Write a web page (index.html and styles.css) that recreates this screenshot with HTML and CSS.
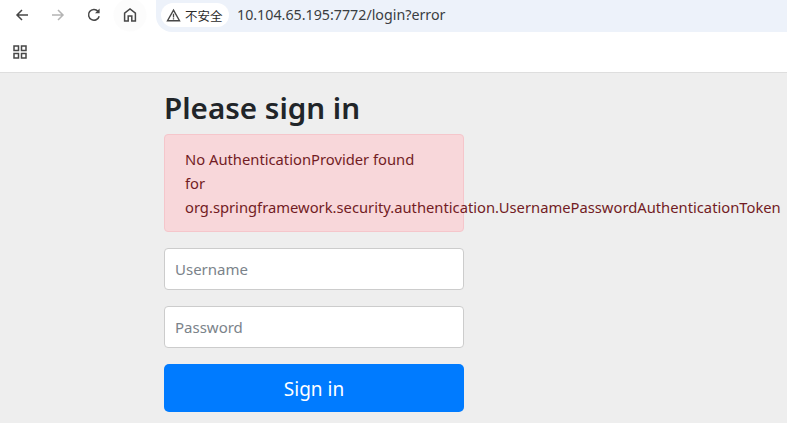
FILE: index.html
```html
<!DOCTYPE html>
<html lang="en">
<head>
<meta charset="utf-8">
<title>Please sign in</title>
<link rel="stylesheet" href="styles.css">
</head>
<body>
<header class="chrome">
  <div class="toolbar">
    <nav class="navs">
      <span class="nav"><svg viewBox="0 0 16 16" width="16" height="16"><path d="M14 8H3M8 3 3 8l5 5" fill="none" stroke="#474747" stroke-width="1.5"/></svg></span>
      <span class="nav"><svg viewBox="0 0 16 16" width="16" height="16"><path d="M2 8h11M8 3l5 5-5 5" fill="none" stroke="#b4b4b4" stroke-width="1.5"/></svg></span>
      <span class="nav"><svg viewBox="0 0 16 16" width="16" height="16"><path d="M13.2 9.2A5.4 5.4 0 1 1 12 4.2" fill="none" stroke="#474747" stroke-width="1.5"/><path d="M13.6 1.6v4.6H9z" fill="#474747"/></svg></span>
      <span class="nav nav-home"><svg viewBox="0 0 16 16" width="16" height="16"><path d="M2.6 14V6.200L8 2l5.400 4.200V14H9.800V9H6.200v5z" fill="none" stroke="#474747" stroke-width="1.5"/></svg></span>
    </nav>
    <div class="address">
      <span class="chip"><svg viewBox="0 0 16 16" width="15" height="15"><path d="M8 2.200 14.400 13.600H1.600z" fill="none" stroke="#474747" stroke-width="1.5"/><path d="M7.300 6.200h1.400v4H7.300zM7.300 11h1.400v1.300H7.300z" fill="#474747"/></svg><span class="chip-text">不安全</span></span>
      <span class="url">10.104.65.195:7772/login?error</span>
    </div>
  </div>
  <div class="bookmarks">
    <svg viewBox="0 0 14 14" width="14" height="14"><path d="M1 1h4.500v4.500H1zM8.500 1H13v4.500H8.500zM1 8.500h4.500V13H1zM8.500 8.500H13V13H8.500z" fill="none" stroke="#474747" stroke-width="1.500"/></svg>
  </div>
</header>
<main class="page">
  <form class="signin">
    <h2 class="heading">Please sign in</h2>
    <div class="alert">No AuthenticationProvider found<br>for<br>org.springframework.security.authentication.UsernamePasswordAuthenticationToken</div>
    <input class="field" type="text" placeholder="Username">
    <input class="field" type="password" placeholder="Password">
    <button class="submit" type="button">Sign in</button>
  </form>
</main>
</body>
</html>
```
FILE: styles.css
```css
* { box-sizing: border-box; }
html, body { margin: 0; height: 100%; overflow: hidden; }
body {
  display: flex;
  flex-direction: column;
  background: #eeeeee;
  font-family: "Noto Sans", "Open Sans", sans-serif;
  color: #212529;
}
.chrome {
  height: 73px;
  background: #fff;
  border-bottom: 1px solid #dedede;
  flex: none;
}
.toolbar { display: flex; height: 32px; }
.navs { display: flex; width: 156px; padding-left: 4px; }
.nav {
  width: 36px;
  height: 32px;
  display: flex;
  align-items: center;
  justify-content: center;
  padding-bottom: 2px;
}
.nav-home { background: radial-gradient(circle at center 15px, #fcfcfc 0 16px, transparent 17px); }
.address {
  flex: 1;
  background: #edf2fa;
  border-radius: 0 0 0 16px;
  display: flex;
  align-items: flex-start;
  padding: 3px 0 0 5px;
}
.chip {
  width: 68px;
  height: 24px;
  background: #fff;
  border-radius: 12px;
  display: flex;
  align-items: center;
  gap: 4px;
  padding-left: 5px;
}
.chip-text {
  font: 12.500px "Noto Sans CJK SC", sans-serif;
  color: #2b2b2b;
}
.url {
  margin-left: 8px;
  font-size: 14.250px;
  line-height: 24px;
  color: #3a3d42;
}
.bookmarks { height: 40px; padding: 10px 0 0 13px; }
.page { flex: 1; padding-left: 164px; }
.signin { width: 300px; }
.heading {
  margin: 0;
  padding-top: 15px;
  height: 61px;
  font-size: 29.600px;
  line-height: 40px;
  font-weight: 600;
  white-space: nowrap;
}
.alert {
  height: 98px;
  margin-bottom: 16px;
  padding: 12px 20px;
  background: #f8d7da;
  border: 1px solid #f5c6cb;
  border-radius: 4px;
  color: #721c24;
  font-size: 14.760px;
  line-height: 24px;
}
.field {
  display: block;
  width: 100%;
  height: 42px;
  margin-bottom: 16px;
  padding: 0 10px;
  background: #fff;
  border: 1px solid #cccccc;
  border-radius: 4px;
  font: 15px "Noto Sans", sans-serif;
}
.field::placeholder { color: #7b838a; opacity: 1; }
.submit {
  display: block;
  width: 100%;
  height: 48px;
  padding: 1px 0 0;
  background: #007bff;
  border: 0;
  border-radius: 5px;
  color: #fff;
  font: 19px "Noto Sans", sans-serif;
}
```
